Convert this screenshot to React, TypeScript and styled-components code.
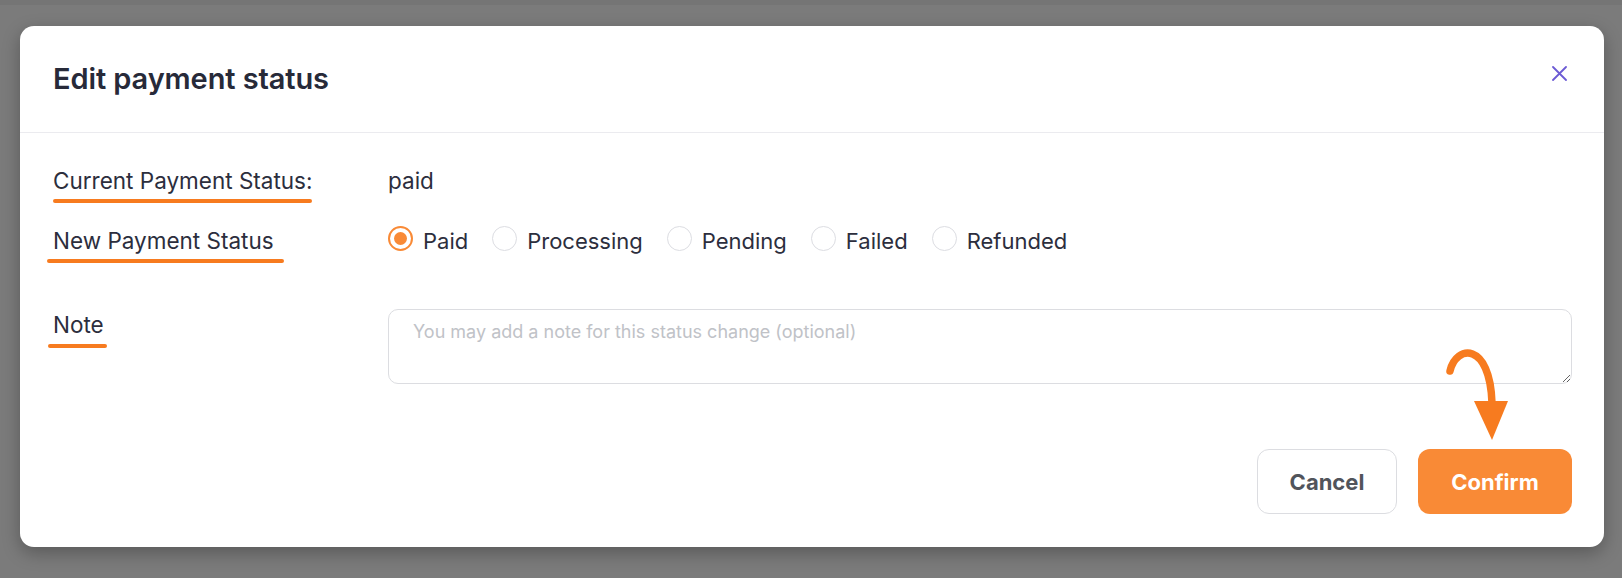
import React, { useState } from "react";
import styled, { createGlobalStyle, css } from "styled-components";

/* === GLOBAL === */
const GlobalStyle = createGlobalStyle`
  html, body {
    margin: 0;
    padding: 0;
    background: #7b7b7b;
  }
  body {
    font-family: Inter, "Noto Sans", "Liberation Sans", sans-serif;
    -webkit-font-smoothing: antialiased;
  }
  * { box-sizing: border-box; }
`;

const ORANGE = "#f98a36";
const MARK = "#f77b1f";

/* === LAYOUT === */
const Page = styled.div`
  width: 1622px;
  height: 578px;
  padding: 26px 18px 0 20px;
  background: linear-gradient(#757575 0, #757575 5px, #7b7b7b 5px);
  overflow: hidden;
`;

const Modal = styled.div`
  position: relative;
  width: 1584px;
  height: 521px;
  background: #ffffff;
  border-radius: 14px;
  box-shadow: 0 6px 18px rgba(0, 0, 0, 0.28);
  display: flex;
  flex-direction: column;
`;

const Header = styled.div`
  height: 107px;
  display: flex;
  align-items: center;
  padding: 0 37px 0 33px;
  border-bottom: 1px solid #ebebef;
`;

const Title = styled.h2`
  flex: 1;
  margin: 0;
  font-size: 29px;
  line-height: 36px;
  font-weight: 600;
  color: #272a39;
  letter-spacing: -0.1px;
`;

const CloseButton = styled.button`
  align-self: flex-start;
  margin-top: 40px;
  width: 15px;
  height: 15px;
  padding: 0;
  border: 0;
  background: none;
  cursor: pointer;
  display: flex;
`;

const Body = styled.div`
  display: grid;
  grid-template-columns: 335px 1fr;
  align-items: start;
  row-gap: 32px;
  padding: 34px 32px 0 33px;
`;

const Label = styled.div<{ $mt?: number }>`
  font-size: 22.5px;
  line-height: 28px;
  color: #2c2e3d;
  margin-top: ${({ $mt }) => $mt ?? 0}px;
`;

const Marked = styled.span<{ $left: number; $right: number; $below: number; $thick: number }>`
  position: relative;
  display: inline-block;
  &::after {
    content: "";
    position: absolute;
    left: ${({ $left }) => $left}px;
    right: ${({ $right }) => $right}px;
    bottom: ${({ $below }) => $below}px;
    height: ${({ $thick }) => $thick}px;
    border-radius: 3px;
    background: ${MARK};
  }
`;

const Value = styled.div`
  font-size: 22.5px;
  line-height: 28px;
  color: #2c2e3d;
`;

const RadioGroup = styled.div`
  display: flex;
  align-items: center;
  gap: 24px;
  height: 28px;
`;

const RadioOption = styled.label`
  display: flex;
  align-items: center;
  gap: 10px;
  font-size: 22px;
  line-height: 28px;
  color: #2c2e3d;
  cursor: pointer;
`;

const RadioCircle = styled.span<{ $checked: boolean }>`
  width: 25px;
  height: 25px;
  margin-top: -6px;
  border-radius: 50%;
  border: 1px solid #dcdde2;
  display: flex;
  align-items: center;
  justify-content: center;
  ${({ $checked }) =>
    $checked &&
    css`
      border: 2px solid ${ORANGE};
      &::after {
        content: "";
        width: 13px;
        height: 13px;
        border-radius: 50%;
        background: ${ORANGE};
      }
    `}
`;

const HiddenInput = styled.input`
  display: none;
`;

const NoteArea = styled.textarea`
  margin-top: 22px;
  height: 75px;
  width: 100%;
  resize: vertical;
  border: 1px solid #dcdde1;
  border-radius: 10px;
  padding: 10px 24px;
  font-family: inherit;
  font-size: 18px;
  line-height: 24px;
  color: #2c2e3d;
  outline: none;
  &::placeholder {
    color: #c0c2c7;
  }
`;

const Footer = styled.div`
  display: flex;
  justify-content: flex-end;
  gap: 21px;
  padding: 65px 32px 0;
`;

const Button = styled.button<{ $primary?: boolean }>`
  height: 65px;
  border-radius: 12px;
  font-family: inherit;
  font-size: 22px;
  font-weight: 700;
  cursor: pointer;
  ${({ $primary }) =>
    $primary
      ? css`
          width: 154px;
          border: 0;
          background: ${ORANGE};
          color: #ffffff;
        `
      : css`
          width: 140px;
          border: 1px solid #dcdde1;
          background: #ffffff;
          color: #51545b;
        `}
`;

const Arrow = styled.svg`
  position: absolute;
  left: 1400px;
  top: 293px;
  pointer-events: none;
`;

const statuses = ["Paid", "Processing", "Pending", "Failed", "Refunded"];

export default function App() {
    const [status, setStatus] = useState("Paid");
    const [note, setNote] = useState("");

    return (
        <>
            <GlobalStyle />
            <Page>
                <Modal>
                    <Header>
                        <Title>Edit payment status</Title>
                        <CloseButton aria-label="Close">
                            <svg width="15" height="15" viewBox="0 0 15 15">
                                <path d="M1 1 L14 14 M14 1 L1 14" stroke="#6c5bd4" strokeWidth="1.8" strokeLinecap="round" />
                            </svg>
                        </CloseButton>
                    </Header>

                    <Body>
                        <Label>
                            <Marked $left={0} $right={0} $below={-8} $thick={4}>Current Payment Status:</Marked>
                        </Label>
                        <Value>paid</Value>

                        <Label>
                            <Marked $left={-6} $right={-10} $below={-8} $thick={4}>New Payment Status</Marked>
                        </Label>
                        <RadioGroup>
                            {statuses.map((s) => (
                                <RadioOption key={s}>
                                    <HiddenInput
                                        type="radio"
                                        name="status"
                                        checked={status === s}
                                        onChange={() => setStatus(s)}
                                    />
                                    <RadioCircle $checked={status === s} />
                                    {s}
                                </RadioOption>
                            ))}
                        </RadioGroup>

                        <Label $mt={24}>
                            <Marked $left={-5} $right={-3} $below={-9} $thick={4}>Note</Marked>
                        </Label>
                        <NoteArea
                            value={note}
                            onChange={(e) => setNote(e.target.value)}
                            placeholder="You may add a note for this status change (optional)"
                        />
                    </Body>

                    <Footer>
                        <Button>Cancel</Button>
                        <Button $primary>Confirm</Button>
                    </Footer>

                    <Arrow width="120" height="130" viewBox="0 0 120 130">
                        <path d="M30 52 C 36 26, 70 22, 72 84" fill="none" stroke={MARK} strokeWidth="7.5" strokeLinecap="round" />
                        <path d="M54 82 L88 82 L72 121 Z" fill={MARK} />
                    </Arrow>
                </Modal>
            </Page>
        </>
    );
}
